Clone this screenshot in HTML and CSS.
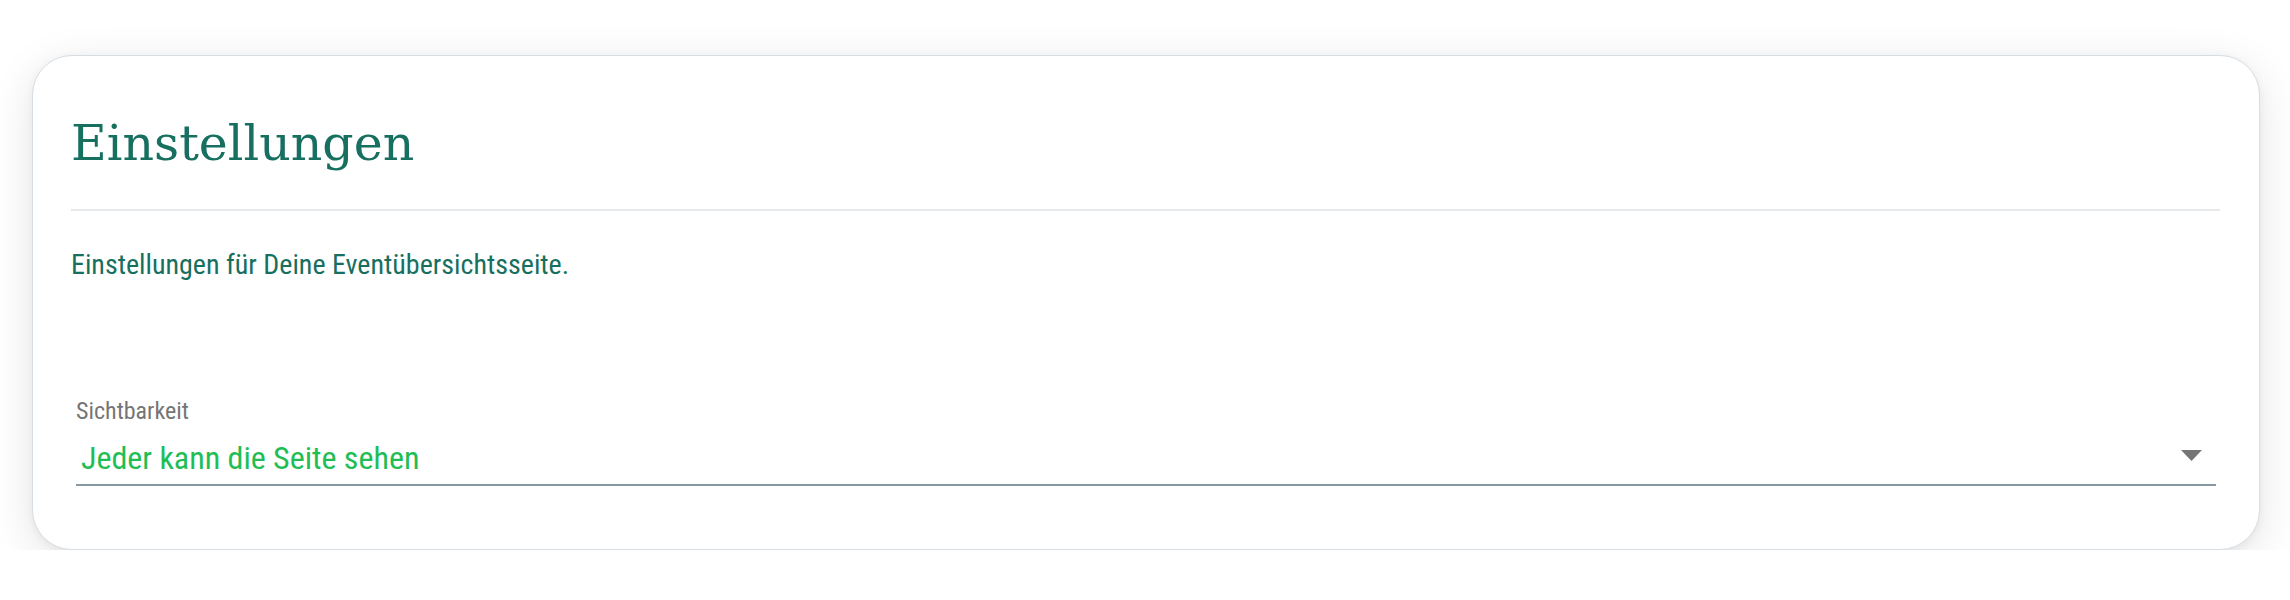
FILE: index.html
```html
<!DOCTYPE html>
<html lang="de">
<head>
<meta charset="utf-8">
<title>Einstellungen</title>
<link rel="stylesheet" href="styles.css">
</head>
<body>
<main class="page">
  <section class="card">
    <h1 class="card-title">Einstellungen</h1>
    <hr class="divider">
    <p class="card-desc">Einstellungen für Deine Eventübersichtsseite.</p>
    <div class="field">
      <label class="field-label" for="visibility">Sichtbarkeit</label>
      <div class="select">
        <span class="select-value" id="visibility">Jeder kann die Seite sehen</span>
        <svg class="select-arrow" width="21" height="11" viewBox="0 0 21 11" aria-hidden="true"><path d="M0 0 L21 0 L10.5 11 Z" fill="#757575"/></svg>
      </div>
    </div>
  </section>
</main>
</body>
</html>
```

FILE: styles.css
```css
html, body {
  margin: 0;
  padding: 0;
  background: #ffffff;
}

.page {
  padding: 55px 30px 0 32px;
}

.card {
  box-sizing: border-box;
  width: 2228px;
  height: 495px;
  background: #ffffff;
  border: 1px solid #d6dee4;
  border-radius: 40px;
  box-shadow: 0 10px 44px rgba(0, 0, 0, 0.11), 0 2px 8px rgba(0, 0, 0, 0.05);
  padding: 58px 39px 0 38px;
}

.card-title {
  margin: 0;
  font-family: "Roboto Slab", "DejaVu Serif", serif;
  font-weight: 400;
  font-size: 49px;
  line-height: 60px;
  color: #176f60;
}

.divider {
  margin: 35px 0 0;
  border: 0;
  height: 2px;
  background: #e6e9ec;
}

.card-desc {
  margin: 37px 0 0;
  font-family: "Roboto Condensed", Roboto, sans-serif;
  font-stretch: condensed;
  font-size: 28px;
  line-height: 34px;
  color: #176f60;
}

.field {
  margin: 115px 4px 0 5px;
  font-family: "Roboto Condensed", Roboto, sans-serif;
  font-stretch: condensed;
}

.field-label {
  display: block;
  font-size: 24px;
  line-height: 28px;
  color: #757575;
}

.select {
  display: flex;
  align-items: center;
  justify-content: space-between;
  border-bottom: 2px solid #8798a3;
  padding: 13px 14px 6px 5px;
}

.select-value {
  font-size: 32px;
  line-height: 40px;
  color: #1fbe55;
}

.select-arrow {
  display: block;
  margin-bottom: 6px;
}
```
